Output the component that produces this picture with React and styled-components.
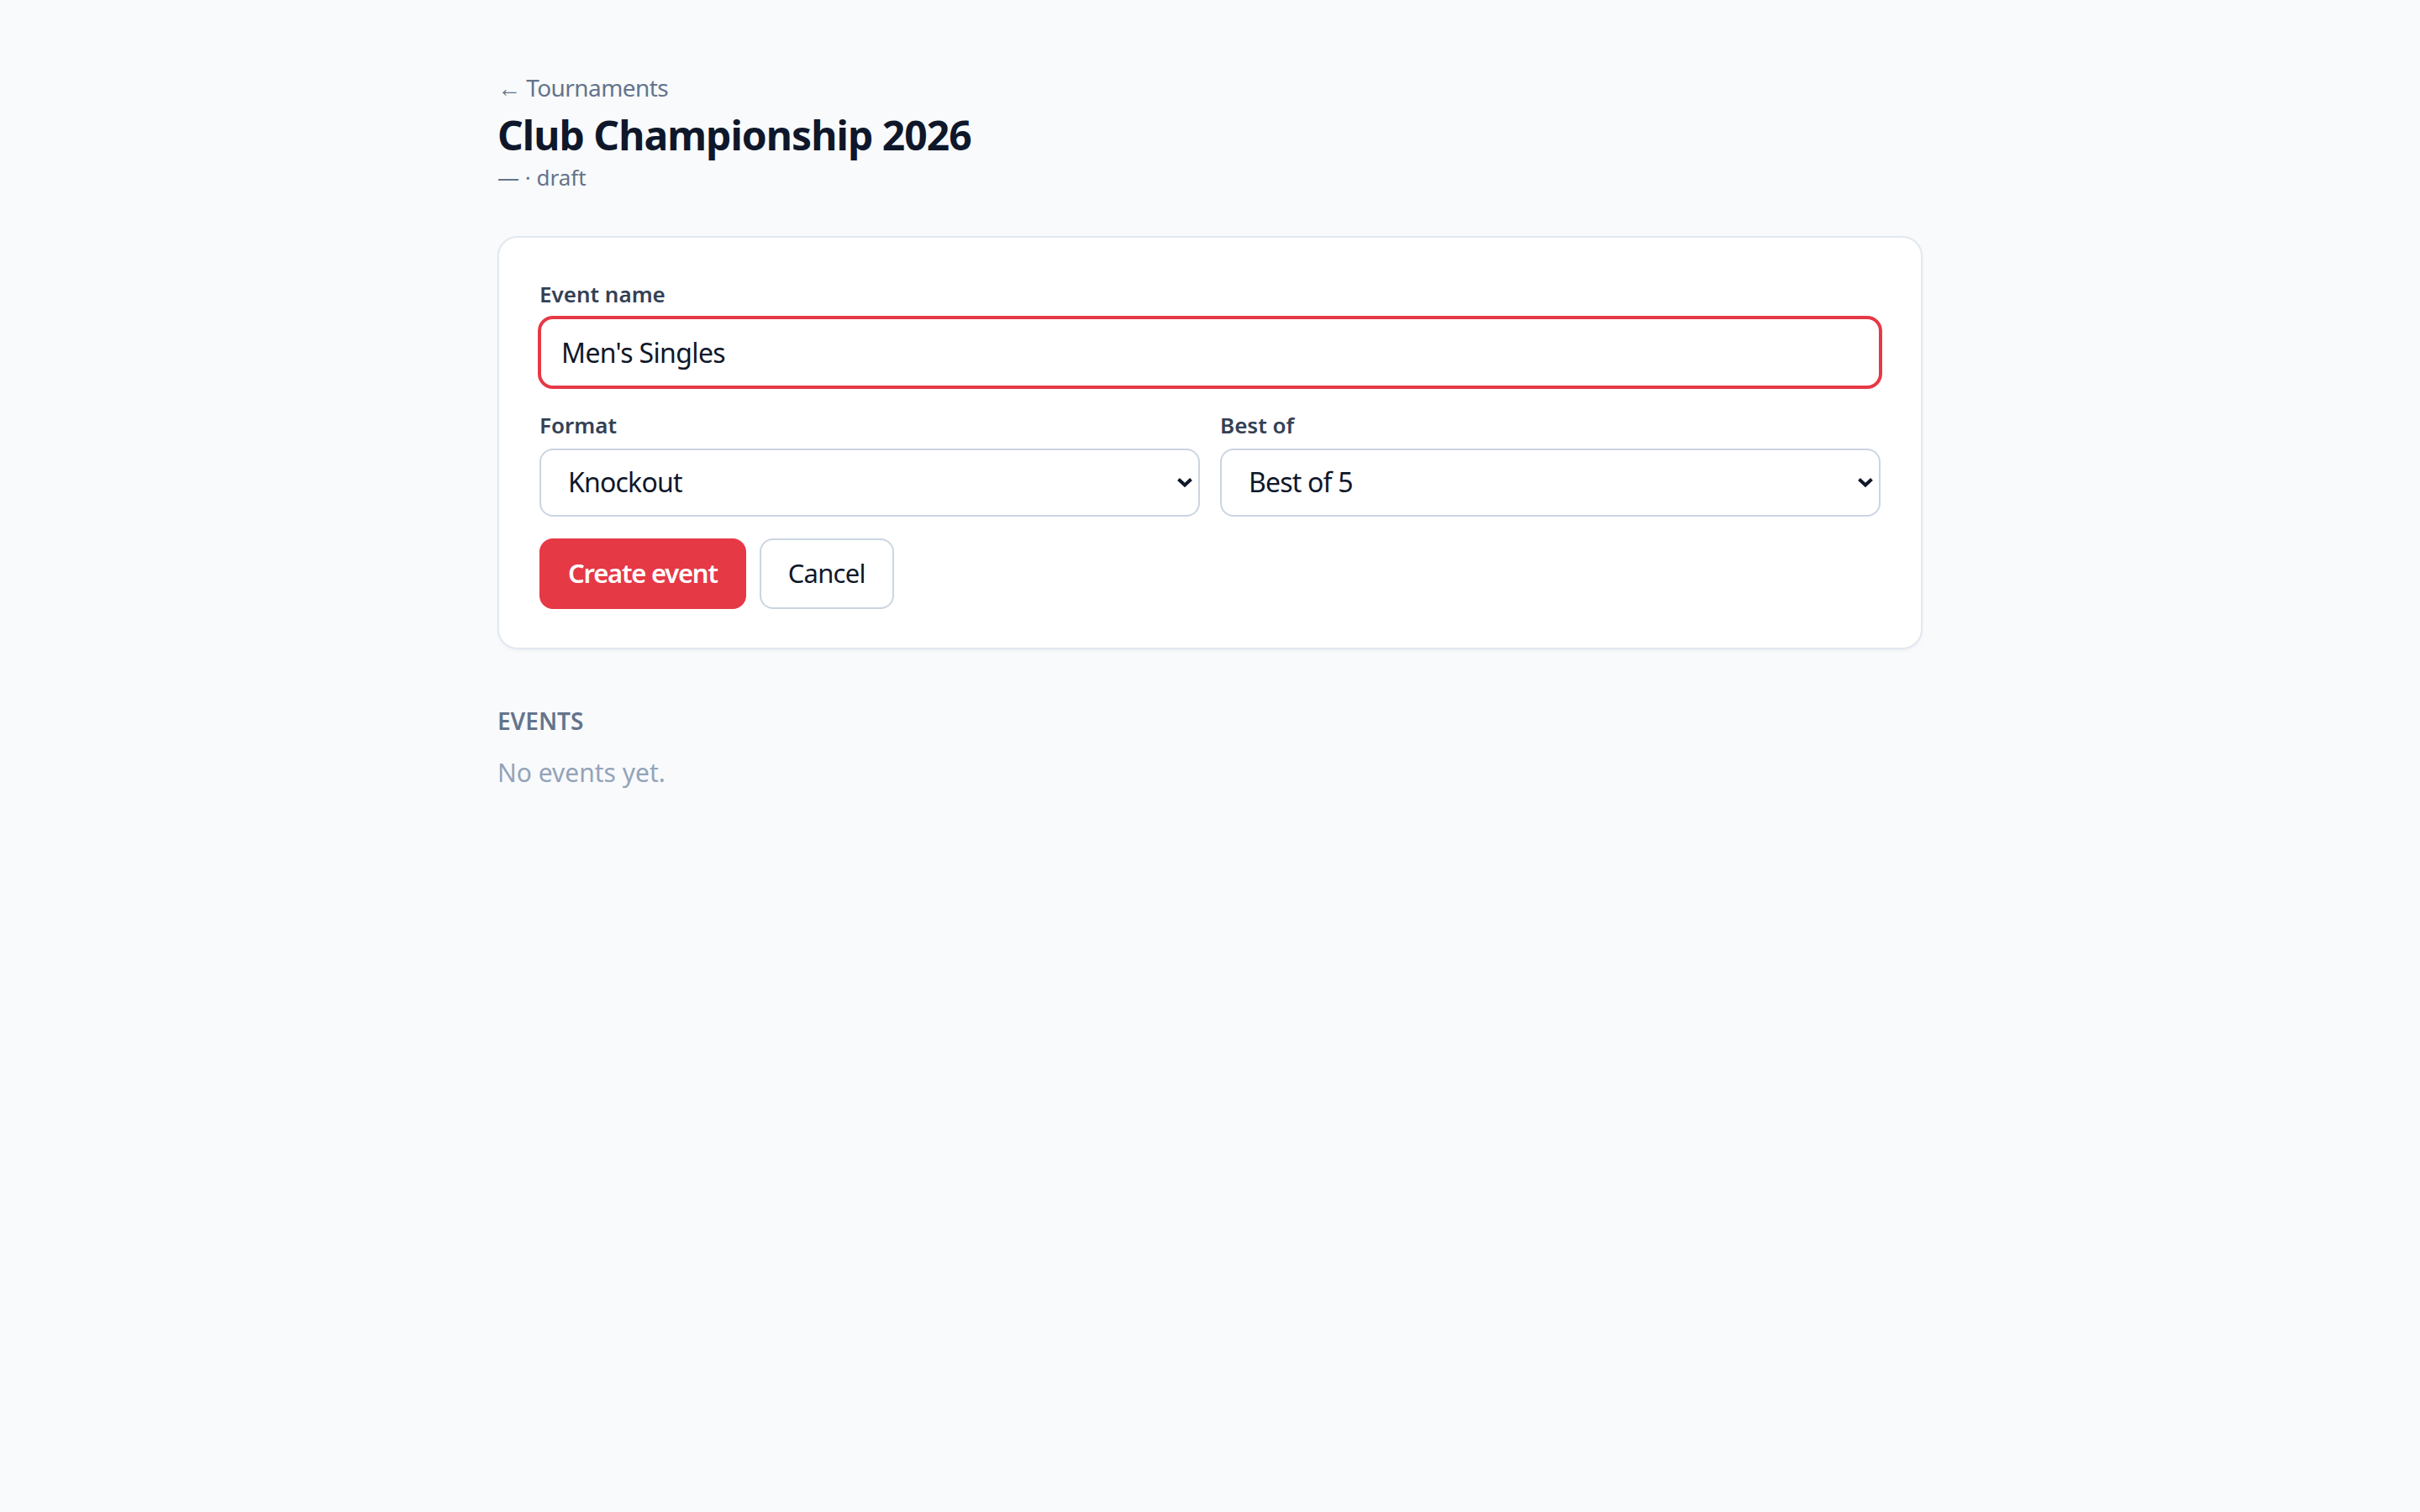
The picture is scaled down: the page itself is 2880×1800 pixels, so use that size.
import React, { useState } from 'react';
import styled, { createGlobalStyle, css } from 'styled-components';

const red = '#e63946';

const GlobalStyle = createGlobalStyle`
  * { box-sizing: border-box; }
  body {
    margin: 0;
    background: #f8fafc;
    color: #0f172a;
    font-family: "Segoe UI", "Noto Sans", "Open Sans", sans-serif;
    line-height: 1.5;
  }
`;

const Page = styled.main`
  max-width: 1696px;
  margin: 0 auto;
  padding: 80px 0;
`;

const BackRow = styled.div`
  font-size: 28px;
  line-height: 48px;
`;

const BackLink = styled.a`
  color: #64748b;
  text-decoration: none;
  letter-spacing: -0.02em;
`;

const Title = styled.h1`
  margin: 4px 0 2px;
  font-size: 48px;
  font-weight: 700;
  line-height: 1.2;
  letter-spacing: -0.02em;
  color: #0f172a;
`;

const Meta = styled.div`
  font-size: 26px;
  color: #64748b;
`;

const Card = styled.form`
  margin-top: 50px;
  background: #fff;
  border: 2px solid #e2e8f0;
  border-radius: 24px;
  padding: 48px 48px 46px;
  box-shadow: 0 2px 4px rgba(15, 23, 42, 0.04);
`;

const Field = styled.div`
  margin-bottom: 26px;
`;

const Label = styled.label`
  display: block;
  margin-bottom: 8px;
  font-size: 26px;
  font-weight: 600;
  color: #334155;
`;

const TextInput = styled.input`
  display: block;
  width: 100%;
  height: 83px;
  padding: 0 24px;
  border: 2px solid #cbd5e1;
  border-radius: 16px;
  background: #fff;
  font: inherit;
  font-size: 32px;
  letter-spacing: -0.02em;
  color: #0f172a;
  outline: none;

  ${(p) =>
    p.$active &&
    css`
      border-color: ${red};
      box-shadow: 0 0 0 2px ${red};
    `}
`;

const Row = styled.div`
  display: grid;
  grid-template-columns: 1fr 1fr;
  gap: 24px;
`;

const SelectWrap = styled.div`
  position: relative;
`;

const Select = styled.select`
  display: block;
  width: 100%;
  height: 81px;
  padding: 0 56px 0 32px;
  border: 2px solid #cbd5e1;
  border-radius: 16px;
  background: #fff;
  font: inherit;
  font-size: 32px;
  letter-spacing: -0.025em;
  color: #0f172a;
  appearance: none;
  -webkit-appearance: none;
`;

const Chevron = styled.svg`
  position: absolute;
  right: 8px;
  top: 50%;
  width: 20px;
  height: 12px;
  margin-top: -6px;
  pointer-events: none;
`;

const Actions = styled.div`
  display: flex;
  gap: 16px;
`;

const Button = styled.button`
  height: 84px;
  padding: 0 32px;
  border-radius: 16px;
  font: inherit;
  font-size: 31px;
  cursor: pointer;
  border: 2px solid ${(p) => (p.$primary ? red : '#cbd5e1')};
  background: ${(p) => (p.$primary ? red : '#fff')};
  color: ${(p) => (p.$primary ? '#fff' : '#0f172a')};
  font-weight: ${(p) => (p.$primary ? 600 : 400)};
  letter-spacing: ${(p) => (p.$primary ? '-0.04em' : '-0.025em')};
`;

const Section = styled.section`
  margin-top: 64px;
`;

const SectionTitle = styled.h2`
  margin: 0 0 18px;
  font-size: 28px;
  font-weight: 600;
  line-height: 42px;
  text-transform: uppercase;
  color: #64748b;
`;

const Empty = styled.p`
  margin: 0;
  font-size: 30px;
  color: #94a3b8;
`;

function Dropdown({ id, value, onChange, children }) {
  return (
    <SelectWrap>
      <Select id={id} value={value} onChange={onChange}>
        {children}
      </Select>
      <Chevron viewBox="0 0 20 12" aria-hidden="true">
        <polyline
          points="2.5,2.5 10,9.5 17.5,2.5"
          fill="none"
          stroke="#0f172a"
          strokeWidth="4"
          strokeLinejoin="miter"
        />
      </Chevron>
    </SelectWrap>
  );
}

export default function App() {
  const [name, setName] = useState("Men's Singles");
  const [format, setFormat] = useState('knockout');
  const [bestOf, setBestOf] = useState('5');

  return (
    <>
      <GlobalStyle />
      <Page>
        <BackRow>
          <BackLink href="#">← Tournaments</BackLink>
        </BackRow>
        <Title>Club Championship 2026</Title>
        <Meta>— · draft</Meta>

        <Card onSubmit={(e) => e.preventDefault()}>
          <Field>
            <Label htmlFor="event-name">Event name</Label>
            <TextInput
              id="event-name"
              $active
              value={name}
              onChange={(e) => setName(e.target.value)}
            />
          </Field>
          <Row>
            <Field>
              <Label htmlFor="format">Format</Label>
              <Dropdown id="format" value={format} onChange={(e) => setFormat(e.target.value)}>
                <option value="knockout">Knockout</option>
                <option value="round-robin">Round robin</option>
                <option value="groups">Groups + knockout</option>
              </Dropdown>
            </Field>
            <Field>
              <Label htmlFor="best-of">Best of</Label>
              <Dropdown id="best-of" value={bestOf} onChange={(e) => setBestOf(e.target.value)}>
                <option value="3">Best of 3</option>
                <option value="5">Best of 5</option>
                <option value="7">Best of 7</option>
              </Dropdown>
            </Field>
          </Row>
          <Actions>
            <Button type="submit" $primary>Create event</Button>
            <Button type="button">Cancel</Button>
          </Actions>
        </Card>

        <Section>
          <SectionTitle>Events</SectionTitle>
          <Empty>No events yet.</Empty>
        </Section>
      </Page>
    </>
  );
}
